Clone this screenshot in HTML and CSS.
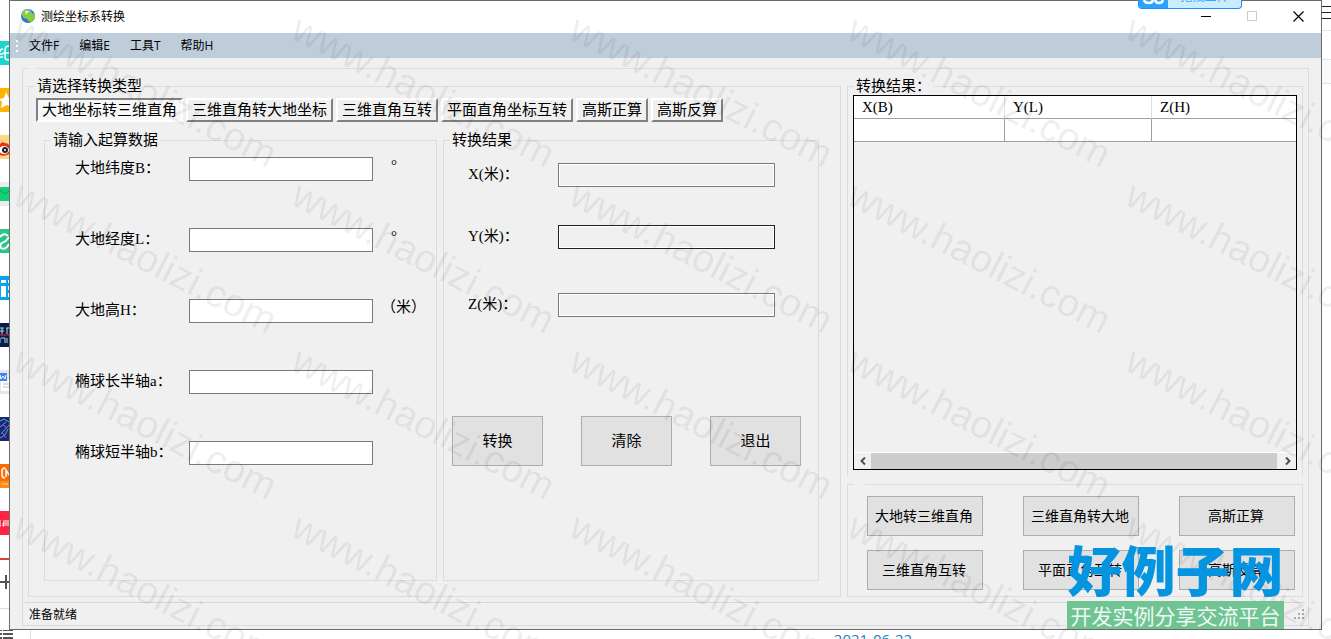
FILE: index.html
```html
<!DOCTYPE html>
<html lang="zh-CN">
<head>
    <meta charset="UTF-8">
    <meta name="viewport" content="width=device-width, initial-scale=1.0">
    <title>测绘坐标系转换</title>
    <link rel="stylesheet" href="styles.css">
</head>
<body>
    <div class="desktop">
        <div class="rail">
            <svg class="app" viewBox="0 0 9 24"><rect width="9" height="24" fill="#1cd5cf"/><path d="M0 13h3M9 5q-4 0-4 4v7q0 3 4 3M3 12h6M3 8q-3 0-3 3M3 16H0" stroke="#fff" stroke-width="1.500" fill="none"/></svg>
            <svg class="app" viewBox="0 0 9 24"><rect width="9" height="24" fill="#ffb404"/><path d="M6 4l3 6v8l-2-1-6 3 1-6-3-3 5-1z" fill="#fff"/></svg>
            <svg class="app" viewBox="0 0 9 24"><rect width="9" height="24" fill="#fed884"/><path d="M0 9q2-3 5-1 3 0 4 2v9q-5 3-9 1z" fill="#e63419"/><ellipse cx="4" cy="15" rx="5" ry="4" fill="#fff"/><circle cx="5" cy="15" r="3" fill="#222"/><circle cx="5" cy="15" r="1" fill="#fff"/></svg>
            <svg class="app" viewBox="0 0 9 24"><rect width="9" height="24" fill="#ececec"/><rect y="5" width="9" height="14" fill="#13d078"/><path d="M0 8l5 4 4-3" stroke="#0a9c55" fill="none"/></svg>
            <svg class="app" viewBox="0 0 9 24"><rect width="9" height="24" fill="#2bc48a"/><path d="M0 8l2-2q3-2 6 1M9 8q-3 5-7 6-3 2-1 5 3 2 6-1l2-3" stroke="#fff" stroke-width="2" fill="none"/></svg>
            <svg class="app" viewBox="0 0 9 24"><rect width="9" height="24" fill="#06a4f3"/><path d="M1 4h5v3H1zM1 10h5v11H1zM8 4h1v3H8zM8 10h1v4H8zM8 17h1v4H8z" fill="#fff"/></svg>
            <svg class="app" viewBox="0 0 9 24"><rect width="9" height="24" fill="#04204c"/><path d="M0 5h4M2 5v6M0 8h4M6 5h3M7 5v6M0 15v5M1 15h4v5M7 15v5" stroke="#c8cdd8" fill="none"/><path d="M0 12h9" stroke="#e8274b"/></svg>
            <svg class="app" viewBox="0 0 9 24"><rect width="9" height="24" fill="#e6e6e6"/><rect x="1" y="10" width="8" height="11" fill="#fff"/><rect y="3" width="7" height="8" fill="#3f86f5"/><path d="M0 5l1 4 2-3 2 3 1-4" stroke="#fff" fill="none"/><path d="M3 14h6M3 17h6" stroke="#bbb"/></svg>
            <svg class="app" viewBox="0 0 9 24"><rect width="9" height="24" fill="#20246f"/><path d="M0 4l4-2 5 3M0 10l6-5M1 17l8-9M0 21l5-3 3-6" stroke="#36b6ee" fill="none"/><path d="M3 8l4 3M2 15l4 6" stroke="#a45be0" fill="none"/></svg>
            <svg class="app" viewBox="0 0 9 24"><rect width="9" height="24" fill="#ff6a00"/><rect y="17" width="9" height="7" fill="#ff8c1a"/><path d="M5 4q-3 0-3 3v4q0 3 3 3M6 13V6l3 5" stroke="#fff" stroke-width="1.500" fill="none"/><path d="M2 20h6" stroke="#ffd6ae"/></svg>
            <svg class="app" viewBox="0 0 9 24"><rect width="9" height="24" fill="#ff2541"/><path d="M0 9v6h1M4 9v6H3v-3h1M6 9v6M8 9v6" stroke="#fff" fill="none"/></svg>
            <svg class="more" viewBox="0 0 9 51"><path d="M0 1h9" stroke="#d6432f" stroke-width="2"/><path d="M0 24h9M6 17v14" stroke="#555" stroke-width="2"/><path d="M0 50.500h9" stroke="#ddd"/></svg>
        </div>

        <div class="window">
            <header class="titlebar">
                <svg class="globe" viewBox="0 0 14 14"><circle cx="7" cy="7" r="7" fill="#2f76c4"/><circle cx="6" cy="5" r="5" fill="#78b7ea"/><path d="M1 5q2-4 6-4l3 2-2 3-3 3-3-1zM8 6l5-2 1 4-3 5-4-1-1-3z" fill="#8ad02b"/><path d="M4 2l4 0-3 4z" fill="#e7f6c4"/></svg>
                <h1>测绘坐标系转换</h1>
                <div class="controls">
                    <button type="button" aria-label="最小化"><svg viewBox="0 0 11 11"><path d="M0 5.500h10" stroke="#000"/></svg></button>
                    <button type="button" aria-label="最大化" disabled><svg viewBox="0 0 11 11"><path d="M.5.5h9v9h-9z" stroke="#ccc" fill="none"/></svg></button>
                    <button type="button" aria-label="关闭"><svg viewBox="0 0 11 11"><path d="M.5.5l10 10M10.500.5l-10 10" stroke="#000" stroke-width="1.200"/></svg></button>
                </div>
            </header>

            <nav class="menu">
                <span class="grip"></span>
                <button type="button">文件F</button>
                <button type="button">编辑E</button>
                <button type="button">工具T</button>
                <button type="button">帮助H</button>
            </nav>

            <fieldset class="outer">
                <legend class="blank"></legend>
                <main class="columns">
                    <fieldset class="types">
                        <legend>请选择转换类型</legend>
                        <div class="tabs">
                            <button type="button" class="active">大地坐标转三维直角</button>
                            <button type="button">三维直角转大地坐标</button>
                            <button type="button">三维直角互转</button>
                            <button type="button">平面直角坐标互转</button>
                            <button type="button">高斯正算</button>
                            <button type="button">高斯反算</button>
                        </div>
                        <form class="panels">
                            <fieldset class="source">
                                <legend>请输入起算数据</legend>
                                <div class="row">
                                    <label for="lat">大地纬度B：</label>
                                    <input type="text" id="lat">
                                    <span class="unit degree">°</span>
                                </div>
                                <div class="row">
                                    <label for="lon">大地经度L：</label>
                                    <input type="text" id="lon">
                                    <span class="unit degree">°</span>
                                </div>
                                <div class="row">
                                    <label for="high">大地高H：</label>
                                    <input type="text" id="high">
                                    <span class="unit">（米）</span>
                                </div>
                                <div class="row">
                                    <label for="axisA">椭球长半轴a：</label>
                                    <input type="text" id="axisA">
                                </div>
                                <div class="row">
                                    <label for="axisB">椭球短半轴b：</label>
                                    <input type="text" id="axisB">
                                </div>
                            </fieldset>
                            <fieldset class="result">
                                <legend>转换结果</legend>
                                <div class="values">
                                    <label for="outX">X(米)：</label>
                                    <input type="text" id="outX" readonly>
                                    <label for="outY">Y(米)：</label>
                                    <input type="text" id="outY" class="hot" readonly>
                                    <label for="outZ">Z(米)：</label>
                                    <input type="text" id="outZ" readonly>
                                </div>
                                <div class="actions">
                                    <button type="button">转换</button>
                                    <button type="button">清除</button>
                                    <button type="button">退出</button>
                                </div>
                            </fieldset>
                        </form>
                    </fieldset>

                    <div class="side">
                        <fieldset class="output">
                            <legend>转换结果：</legend>
                            <div class="datagrid">
                                <table>
                                    <thead>
                                        <tr><th>X(B)</th><th>Y(L)</th><th>Z(H)</th></tr>
                                    </thead>
                                    <tbody>
                                        <tr><td></td><td></td><td></td></tr>
                                    </tbody>
                                </table>
                                <div class="scrollbar">
                                    <button type="button" aria-label="向左"><svg viewBox="0 0 6 8"><path d="M5 .5L1.500 4 5 7.500" stroke="#505050" stroke-width="2" fill="none"/></svg></button>
                                    <span class="thumb"></span>
                                    <button type="button" aria-label="向右"><svg viewBox="0 0 6 8"><path d="M1 .5L4.500 4 1 7.500" stroke="#505050" stroke-width="2" fill="none"/></svg></button>
                                </div>
                            </div>
                        </fieldset>
                        <fieldset class="shortcuts">
                            <legend class="blank"></legend>
                            <div class="buttons">
                                <button type="button">大地转三维直角</button>
                                <button type="button">三维直角转大地</button>
                                <button type="button">高斯正算</button>
                                <button type="button">三维直角互转</button>
                                <button type="button">平面直角互转</button>
                                <button type="button">高斯反算</button>
                            </div>
                        </fieldset>
                    </div>
                </main>
                <footer class="status">
                    <span>准备就绪</span>
                    <svg class="sizer" viewBox="0 0 11 11"><path d="M8 0h2v2H8zM4 4h2v2H4zM8 4h2v2H8zM0 8h2v2H0zM4 8h2v2H4zM8 8h2v2H8z" fill="#a8a8a8"/></svg>
                </footer>
            </fieldset>
        </div>

        <div class="edge">
            <svg viewBox="0 0 9 84"><path d="M0 6.500h9M0 12.500h9M0 18.500h9" stroke="#222"/><path d="M0 30.500h9" stroke="#e4e4e4"/><path d="M0 60h9v23H0z" fill="#fafafa"/><path d="M0 59.500h9M0 83.500h9" stroke="#e4e4e4"/></svg>
        </div>
    </div>

    <div class="below">
        <svg class="list" viewBox="0 0 31 9"><path d="M0 0h2M3 0h10M0 4h2M3 4h10M0 8h2M3 8h10" stroke="#555" stroke-width="2"/><path d="M30.500 0v9" stroke="#ddd"/></svg>
        <time datetime="2021-06-22">2021-06-22</time>
    </div>

    <div class="upload">
        <svg viewBox="0 0 29 8"><path d="M5 0q1 3 5 3 3 0 4-3M16 0q1 3 4 3 3 0 4-3" stroke="#fff" stroke-width="2.500" fill="none"/></svg>
        <span>拖拽上传</span>
    </div>

    <div class="watermark" aria-hidden="true">
        <span>www.haolizi.com</span><span>www.haolizi.com</span><span>www.haolizi.com</span><span>www.haolizi.com</span><span>www.haolizi.com</span>
        <span>www.haolizi.com</span><span>www.haolizi.com</span><span>www.haolizi.com</span><span>www.haolizi.com</span><span>www.haolizi.com</span>
        <span>www.haolizi.com</span><span>www.haolizi.com</span><span>www.haolizi.com</span><span>www.haolizi.com</span><span>www.haolizi.com</span>
        <span>www.haolizi.com</span><span>www.haolizi.com</span><span>www.haolizi.com</span><span>www.haolizi.com</span><span>www.haolizi.com</span>
    </div>

    <div class="brand">
        <strong>好例子网</strong>
        <span>开发实例分享交流平台</span>
    </div>
</body>
</html>
```

FILE: styles.css
```css
* {
    box-sizing: border-box;
}
body {
    display: flex;
    flex-direction: column;
    position: relative;
    margin: 0;
    min-height: 100vh;
    overflow: hidden;
    background-color: white;
    color: black;
    font-family: "Liberation Serif", "Noto Sans CJK SC", serif;
    font-size: 15px;
    line-height: 18px;
}
button, input {
    margin: 0;
    padding: 0;
    border: none;
    border-radius: 0;
    background: none;
    color: inherit;
    font: inherit;
}
svg {
    display: block;
}
fieldset {
    min-width: 0;
    margin: 0;
    padding: 0;
    border: 1px solid #dcdcdc;
}
legend {
    margin-left: 6px;
    padding: 0 2px;
}

/* desktop behind the window */
.desktop {
    display: flex;
    flex: 1;
}
.rail {
    display: flex;
    flex-direction: column;
    gap: 23px;
    width: 9px;
    padding-top: 41px;
}
.app {
    width: 9px;
    height: 24px;
}
.more {
    width: 9px;
    height: 51px;
}
.edge {
    width: 9px;
}
.below {
    display: flex;
    height: 9px;
    overflow: hidden;
}
.below .list {
    width: 31px;
    height: 9px;
}
.below time {
    margin: 0 auto;
    padding-left: 384px;
    color: #1a80c8;
    font: 15px/18px "Open Sans", sans-serif;
}

/* window */
.window {
    display: flex;
    flex: 1;
    flex-direction: column;
    border: 1px solid #6b6b6b;
    background-color: #f0f0f0;
}
.titlebar {
    display: flex;
    align-items: center;
    height: 32px;
    padding: 0 0 2px 11px;
    background-color: white;
}
.globe {
    width: 14px;
    height: 14px;
}
.titlebar h1 {
    margin: 0 0 0 6px;
    font: 12px/16px "Noto Sans CJK SC", sans-serif;
}
.controls {
    display: flex;
    margin-left: auto;
}
.controls button {
    display: flex;
    align-items: center;
    justify-content: center;
    width: 46px;
    height: 29px;
}
.controls svg {
    width: 11px;
    height: 11px;
}
.menu {
    display: flex;
    align-items: center;
    gap: 20px;
    height: 25px;
    padding-left: 6px;
    background-color: #bfcddb;
}
.menu button {
    font: 12px/16px "Open Sans", "Noto Sans CJK SC", sans-serif;
}
.grip {
    width: 2px;
    height: 12px;
    margin-right: -9px;
    background: repeating-linear-gradient(white 0 2px, transparent 2px 5px);
}
.outer {
    display: flex;
    flex: 1;
    flex-direction: column;
    margin: 10px 12px 3px;
}
.blank {
    width: 8px;
    height: 1px;
    padding: 0;
}
.columns {
    display: grid;
    flex: 1;
    grid-template-columns: 1fr 456px;
    gap: 6px;
    padding: 8px 5px 5px;
}

/* conversion types */
.types {
    display: flex;
    flex-direction: column;
}
.tabs {
    display: flex;
    gap: 3px;
    padding: 3px 7px 0;
}
.tabs button {
    height: 24px;
    padding: 0 4px;
    border: 2px solid;
    border-color: white #808080 #808080 white;
    white-space: nowrap;
    line-height: 20px;
}
.tabs .active {
    border-color: #808080 white white #808080;
    background-color: #f8f8f8;
}
.panels {
    display: grid;
    flex: 1;
    grid-template-columns: 393fr 376fr;
    gap: 6px;
    padding: 9px 21px 15px 15px;
}
.source {
    padding: 8px 0 0 30px;
}
.source legend {
    margin-left: -24px;
}
.row {
    display: grid;
    grid-template-columns: 114px 184px 1fr;
    height: 24px;
    margin-bottom: 47px;
}
.row label, .values label {
    line-height: 22px;
}
.row input, .values input {
    height: 24px;
    min-width: 0;
    padding: 0 4px;
    border: 1px solid #7a7a7a;
    background-color: white;
}
.unit {
    padding-left: 8px;
    line-height: 16px;
}
.degree {
    padding-left: 18px;
}
.values {
    display: grid;
    grid-template-columns: 90px 217px;
    grid-template-rows: 62px 68px 24px;
    padding: 14px 0 0 24px;
}
.values input {
    background-color: #f0f0f0;
    box-shadow: inset 0 0 0 1px white;
}
.values .hot {
    border-color: #222;
}
.actions {
    display: flex;
    gap: 38px;
    padding: 99px 8px 0;
}
.actions button, .buttons button {
    border: 1px solid #adadad;
    background-color: #e1e1e1;
}
.actions button {
    width: 91px;
    height: 50px;
}

/* result list and shortcuts */
.side {
    display: flex;
    flex-direction: column;
    gap: 8px;
}
.output {
    display: flex;
    flex: 1;
    flex-direction: column;
    padding: 0 5px 6px;
    border-bottom: none;
}
.output legend {
    margin-left: 1px;
}
.datagrid {
    display: flex;
    flex: 1;
    flex-direction: column;
    border: 1px solid black;
}
.datagrid table {
    width: 100%;
    border-spacing: 0;
    table-layout: fixed;
    background-color: white;
}
.datagrid th, .datagrid td {
    height: 23px;
    padding: 0 0 0 8px;
    border-right: 1px solid #a0a0a0;
    border-bottom: 1px solid #a0a0a0;
    font-weight: normal;
    text-align: left;
}
.datagrid th {
    width: 147px;
    border-right-color: #e0e0e0;
}
.datagrid th:first-child {
    width: 151px;
}
.datagrid th:last-child {
    width: auto;
}
.datagrid th:last-child, .datagrid td:last-child {
    border-right: none;
}
.scrollbar {
    display: flex;
    height: 17px;
    margin-top: auto;
    border-top: 1px solid white;
}
.scrollbar button {
    display: flex;
    align-items: center;
    justify-content: center;
    width: 17px;
}
.scrollbar svg {
    width: 6px;
    height: 8px;
}
.thumb {
    flex: 1;
    margin-right: 2px;
    background-color: #cdcdcd;
}
.shortcuts {
    padding: 11px 7px 6px 19px;
}
.shortcuts legend {
    width: 11px;
    margin-left: -13px;
}
.buttons {
    display: grid;
    grid-template-columns: repeat(3, 1fr);
    gap: 14px 40px;
}
.buttons button {
    height: 40px;
    padding: 2px 2px 0 0;
    font-size: 14px;
}
.status {
    display: flex;
    align-items: center;
    justify-content: space-between;
    height: 23px;
    margin: 0 3px 0 2px;
    padding: 0 0 0 4px;
    border-top: 1px solid #d7d7d7;
    font: 12px/16px "Noto Sans CJK SC", sans-serif;
}
.sizer {
    width: 11px;
    height: 11px;
}

/* things floating over the window */
.upload {
    display: flex;
    position: absolute;
    top: 0;
    right: 89px;
    width: 104px;
    height: 9px;
    overflow: hidden;
    border: 1px solid #1e8fff;
    border-top: none;
    border-radius: 0 0 4px 4px;
    background-color: #c9edff;
}
.upload svg {
    width: 29px;
    height: 8px;
    background-color: #2ba2ff;
}
.upload span {
    margin: -12px auto 0;
    color: #3fa5f8;
    font: 12px/16px "Noto Sans CJK SC", sans-serif;
}
.watermark {
    display: grid;
    position: absolute;
    inset: 0;
    grid-template-columns: repeat(5, 278px);
    grid-auto-rows: 166px;
    align-content: start;
    padding: 6px 0 0 17px;
    overflow: hidden;
    color: rgba(0, 0, 0, 0.08);
    font: 39px/40px "Liberation Sans", sans-serif;
    pointer-events: none;
}
.watermark span {
    height: 40px;
    transform: rotate(27deg);
    transform-origin: 0 50%;
}
.brand {
    position: absolute;
    right: 47px;
    bottom: 10px;
    width: 217px;
    font-family: "Noto Sans CJK SC", sans-serif;
    text-align: center;
    white-space: nowrap;
    pointer-events: none;
}
.brand strong {
    display: block;
    color: #0595e0;
    font-size: 54px;
    font-weight: 900;
    line-height: 64px;
}
.brand span {
    display: block;
    background-color: #70c493;
    color: #eefaf2;
    font-size: 21px;
    line-height: 28px;
}
```
